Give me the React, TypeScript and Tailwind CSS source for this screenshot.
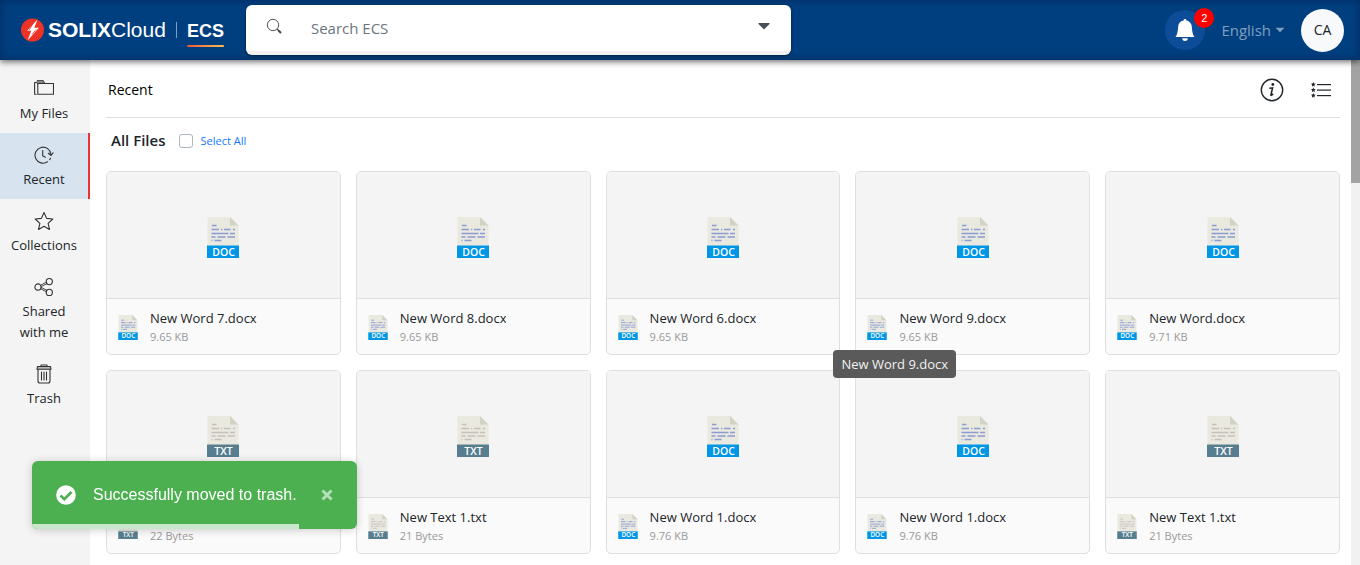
import type { ReactNode } from "react";
import { BsBellFill } from "react-icons/bs";

type Kind = "DOC" | "TXT";
type FileEntry = { name: string; size: string; kind: Kind; tooltip?: boolean };

const files: FileEntry[] = [
  { name: "New Word 7.docx", size: "9.65 KB", kind: "DOC" },
  { name: "New Word 8.docx", size: "9.65 KB", kind: "DOC" },
  { name: "New Word 6.docx", size: "9.65 KB", kind: "DOC" },
  { name: "New Word 9.docx", size: "9.65 KB", kind: "DOC", tooltip: true },
  { name: "New Word.docx", size: "9.71 KB", kind: "DOC" },
  { name: "New Text 2.txt", size: "22 Bytes", kind: "TXT" },
  { name: "New Text 1.txt", size: "21 Bytes", kind: "TXT" },
  { name: "New Word 1.docx", size: "9.76 KB", kind: "DOC" },
  { name: "New Word 1.docx", size: "9.76 KB", kind: "DOC" },
  { name: "New Text 1.txt", size: "21 Bytes", kind: "TXT" },
];

function FileIcon({ kind, className }: { kind: Kind; className: string }) {
  const line = kind === "DOC" ? "#8c9bd3" : "#c9bfba";
  const band = kind === "DOC" ? "#0096e6" : "#567e90";
  return (
    <svg viewBox="0 0 32 41" className={className} aria-hidden="true">
      <path d="M.5 0H23l8.500 8.500V30H.5z" fill="#e9e9e0" />
      <path d="M23 0l8.500 8.500H23z" fill="#d2d3c4" />
      <path
        d="M5 8.500h4.500M4.500 12.500h7.500M14 12.500h1.300M17 12.500h6.500M26 12.500h2M4.500 16.500h17M23 16.500h5M4.500 20h4M10.500 20h8M20.500 20h7.500M4.500 23.500h1M7.500 23.500h7"
        stroke={line}
        strokeWidth="1.500"
        fill="none"
      />
      <path d="M0 28.500h32V41H0z" fill={band} />
      <text
        x="16.500"
        y="38.500"
        textAnchor="middle"
        fill="#fff"
        fontSize="10.500"
        fontWeight="600"
        fontFamily="Open Sans, sans-serif"
      >
        {kind}
      </text>
    </svg>
  );
}

function LineIcon({ children }: { children: ReactNode }) {
  return (
    <svg
      viewBox="0 0 20 20"
      className="h-5 w-5"
      fill="none"
      stroke="#333"
      strokeWidth="1.100"
      strokeLinecap="round"
      strokeLinejoin="round"
      aria-hidden="true"
    >
      {children}
    </svg>
  );
}

const navItems: { label: string; active?: boolean; icon: ReactNode }[] = [
  {
    label: "My Files",
    icon: (
      <LineIcon>
        <path d="M.6 14.500V3.500H3M3.500 5V1.500h5.500l1.500 2.500" />
        <path d="M3 2h5.500l1.500 2H3z" fill="#999" stroke="#777" />
        <path d="M3.800 4.500h15.700v10.800M3.800 4.500v10.800M.6 15.300h1.600M4.200 15.300h15.300" />
      </LineIcon>
    ),
  },
  {
    label: "Recent",
    active: true,
    icon: (
      <LineIcon>
        <path d="M17 9.500A8 8 0 1 0 13.500 16.800M16.500 13.200l-.8 1.500" />
        <path d="M14.300 8.300l2.700 2.200 2-2.700M8.700 5.500v5.300l2.600 1.400" />
      </LineIcon>
    ),
  },
  {
    label: "Collections",
    icon: (
      <LineIcon>
        <path d="M10 1.500l2.600 5.900 6.200.6-4.700 4.300 1.400 6.100-5.500-3.200-5.500 3.200 1.400-6.100L1.200 8l6.200-.6z" />
      </LineIcon>
    ),
  },
  {
    label: "Shared with me",
    icon: (
      <LineIcon>
        <circle cx="4" cy="10" r="3.100" />
        <circle cx="15.300" cy="4.600" r="3.100" />
        <circle cx="15.300" cy="15.400" r="3.100" />
        <path d="M6.500 8.300l6-3.200M7.100 9.600l6-3M6.500 11.700l6 3.200M7.100 10.400l6 3" strokeWidth=".9" />
      </LineIcon>
    ),
  },
  {
    label: "Trash",
    icon: (
      <LineIcon>
        <path d="M7 2.500V1h6v1.500" />
        <path d="M3.500 2.500h13l.5 2.700H3z" fill="#b5b5b5" />
        <path d="M4 5.600V17q0 2 2 2h8q2 0 2-2V5.600M7.500 8v8M10 8v8M12.500 8v8" />
      </LineIcon>
    ),
  },
];

function Header() {
  return (
    <header className="relative z-20 flex h-15 shrink-0 items-center bg-[#003f7f] pr-4 pl-5 shadow-[0_2px_6px_rgba(0,0,0,0.55),inset_0_0_8px_rgba(0,0,30,0.35)]">
      <a
        href="#home"
        className="flex shrink-0 items-center font-['Liberation_Sans',sans-serif] text-white"
      >
        <svg viewBox="0 0 24 24" className="mr-1 h-6 w-6" aria-hidden="true">
          <circle cx="12.500" cy="12" r="11.500" fill="#ee3226" />
          <path d="M17.500 1.500L7 12.800h4.300L7.500 22.500 19 9.800h-4.700z" fill="#fff" />
          <path d="M12.500 6.500L9 12M16 11.500l-4 5" stroke="#ee3226" strokeWidth=".8" />
        </svg>
        <span className="text-[21px] leading-6">
          <b>SOLIX</b>Cloud
        </span>
        <span className="mx-[10px] h-4 w-px bg-[#7f9fbf]" />
        <span className="flex flex-col gap-1 pt-[7px] text-[18px] leading-5 font-bold">
          ECS
          <span className="h-[2px] rounded-full bg-linear-to-r from-[#f0503c] to-[#f9c04d]" />
        </span>
      </a>
      <form
        className="ml-[22px] flex h-[50px] w-[545px] items-center rounded-md border-b-4 border-[#f1f1f1] bg-white pr-[21px] pl-5 shadow-[0_1px_3px_rgba(0,0,0,0.5)]"
        role="search"
      >
        <svg
          viewBox="0 0 16 16"
          className="mb-1 h-4 w-4"
          fill="none"
          stroke="#444"
          aria-hidden="true"
        >
          <circle cx="7" cy="7" r="5.700" strokeWidth=".9" />
          <path d="M11 11l1.500 1.500" strokeWidth="1" />
          <path d="M12 12l3 3" strokeWidth="2" />
        </svg>
        <input
          type="text"
          aria-label="Search ECS"
          placeholder="Search ECS"
          className="ml-[29px] min-w-0 flex-1 text-[15px] outline-none placeholder:text-[#6c757d]"
        />
        <button type="button" aria-label="Search options" className="mb-1 flex">
          <svg viewBox="0 0 12 8" className="h-2 w-3" aria-hidden="true">
            <path d="M.5 1h11v1L6 7.500.5 2z" fill="#495057" />
          </svg>
        </button>
      </form>
      <div className="ml-auto flex items-center">
        <button
          type="button"
          aria-label="Notifications"
          className="relative flex h-10 w-10 items-center justify-center rounded-full bg-[#0d4c96] text-white"
        >
          <BsBellFill className="h-[22px] w-[22px]" />
          <span className="absolute -top-[2px] -right-[9px] flex h-5 w-5 items-center justify-center rounded-full bg-[#ff0000] font-['Liberation_Sans',sans-serif] text-[11px] leading-4">
            2
          </span>
        </button>
        <button type="button" className="ml-4 flex items-center gap-1 text-[15px] text-[#809fbf]">
          English
          <svg viewBox="0 0 10 6" className="h-[6px] w-[10px]" aria-hidden="true">
            <path d="M.5.800h9L5 5.300z" fill="#809fbf" />
          </svg>
        </button>
        <button
          type="button"
          className="ml-4 flex h-[43px] w-[43px] items-center justify-center rounded-full bg-[#f8f9fa] text-sm text-[#212529]"
        >
          CA
        </button>
      </div>
    </header>
  );
}

function Sidebar() {
  return (
    <nav className="w-[90px] shrink-0 bg-[#f4f4f4] pt-[7px]">
      {navItems.map((item) => (
        <a
          key={item.label}
          href={"#" + item.label}
          className={
            "flex flex-col items-center border-r-2 px-2 pt-3 pb-[9px] text-center text-[13px] leading-[21px] text-[#212529] " +
            (item.active ? "border-[#ee3231] bg-[#d7e3ef]" : "border-transparent")
          }
        >
          {item.icon}
          <span className="mt-1">{item.label}</span>
        </a>
      ))}
    </nav>
  );
}

function FileCard({ file }: { file: FileEntry }) {
  return (
    <article className="relative rounded-[5px] border border-[#dfdfdf] bg-[#fafafa]">
      <div className="flex h-[127px] items-center justify-center rounded-t-[4px] border-b border-[#dfdfdf] bg-[#f4f4f4] pt-1">
        <FileIcon kind={file.kind} className="h-[41px] w-8" />
      </div>
      <div className="flex h-[55px] items-center gap-3 px-[11px]">
        <FileIcon kind={file.kind} className="mt-[2px] h-[25px] w-5" />
        <div className="min-w-0">
          <h3 className="truncate text-[13px] leading-5 text-[#212529]">{file.name}</h3>
          <p className="text-[11px] leading-[18px] text-[#999]">{file.size}</p>
        </div>
      </div>
      {file.tooltip && (
        <div
          role="tooltip"
          className="absolute top-[178px] -left-[23px] z-10 rounded-[4px] bg-[#5a5a5a] px-2 text-[13px] leading-7 whitespace-nowrap text-[#f1f1f1]"
        >
          {file.name}
        </div>
      )}
    </article>
  );
}

function Toast() {
  return (
    <div
      role="status"
      className="fixed bottom-9 left-8 z-30 flex h-[68px] w-[325px] items-center overflow-hidden rounded-md bg-[#4caf50] px-6 font-['Liberation_Sans',sans-serif] text-[16px] text-white shadow-[0_1px_8px_rgba(0,0,0,0.2)]"
    >
      <svg viewBox="0 0 20 20" className="h-5 w-5" aria-hidden="true">
        <circle cx="10" cy="10" r="9.800" fill="#fff" />
        <path d="M4.500 10.500l3.800 3.700 7.200-7.200" fill="none" stroke="#4caf50" strokeWidth="2.600" />
      </svg>
      <span className="ml-[17px]">Successfully moved to trash.</span>
      <button type="button" aria-label="Close" className="ml-auto">
        <svg viewBox="0 0 12 12" className="h-3 w-3" aria-hidden="true">
          <path d="M1.500 1.500l9 9M10.500 1.500l-9 9" stroke="#b7dfb9" strokeWidth="3" />
        </svg>
      </button>
      <span className="absolute bottom-0 left-0 h-[5px] w-[82%] bg-[#c9e7cb]" />
    </div>
  );
}

function ListIcon() {
  return (
    <svg viewBox="0 0 20 16" className="h-4 w-5" fill="#212529" aria-hidden="true">
      {[2.5, 8, 13.5].map((y) => (
        <g key={y} transform={`translate(0 ${y})`}>
          <path d="M2.300-2.500l.7 1.600 1.700.1-1.300 1.200.4 1.800-1.500-1-1.500 1 .4-1.800L-.1-.8l1.700-.1z" />
          <path d="M6-.5h14v1.200H6z" />
        </g>
      ))}
    </svg>
  );
}

export default function App() {
  return (
    <div className="flex h-screen flex-col overflow-hidden bg-white font-['Open_Sans',sans-serif] text-[#212529]">
      <Header />
      <div className="flex min-h-0 flex-1">
        <Sidebar />
        <main className="min-w-0 flex-1 overflow-hidden pr-[11px] pl-4">
          <div className="flex h-[58px] items-center border-b border-[#dfdfdf] pt-[2px] pr-[9px] pl-[2px]">
            <h1 className="text-[14px] text-black">Recent</h1>
            <button type="button" aria-label="Details" className="ml-auto">
              <svg viewBox="0 0 24 24" className="h-6 w-6" aria-hidden="true">
                <circle cx="12" cy="12" r="10.700" fill="none" stroke="#212529" strokeWidth="1.400" />
                <circle cx="12.800" cy="6.500" r="1.400" fill="#212529" />
                <path
                  d="M9.300 10.300l3.300-.5-1.700 7c-.2 1 .6.8 2.300-1"
                  fill="none"
                  stroke="#212529"
                  strokeWidth="1.500"
                />
              </svg>
            </button>
            <button type="button" aria-label="List view" className="ml-[27px]">
              <ListIcon />
            </button>
          </div>
          <div className="flex h-[53px] items-center pb-[9px] pl-[5px]">
            <h2 className="text-[15px] font-semibold">All Files</h2>
            <label className="ml-[14px] flex items-center gap-[7px] pt-[2px] text-[11px] text-[#1677ff]">
              <input
                type="checkbox"
                className="h-[14px] w-[14px] appearance-none rounded-[3px] border border-[#adb5bd] bg-white"
              />
              Select All
            </label>
          </div>
          <div className="grid grid-cols-5 gap-[15px]">
            {files.map((file, i) => (
              <FileCard key={i} file={file} />
            ))}
          </div>
        </main>
        <div className="w-[9px] shrink-0 bg-[#f1f1f1]">
          <div className="h-[123px] bg-[#a3a3a3]" />
        </div>
      </div>
      <Toast />
    </div>
  );
}
